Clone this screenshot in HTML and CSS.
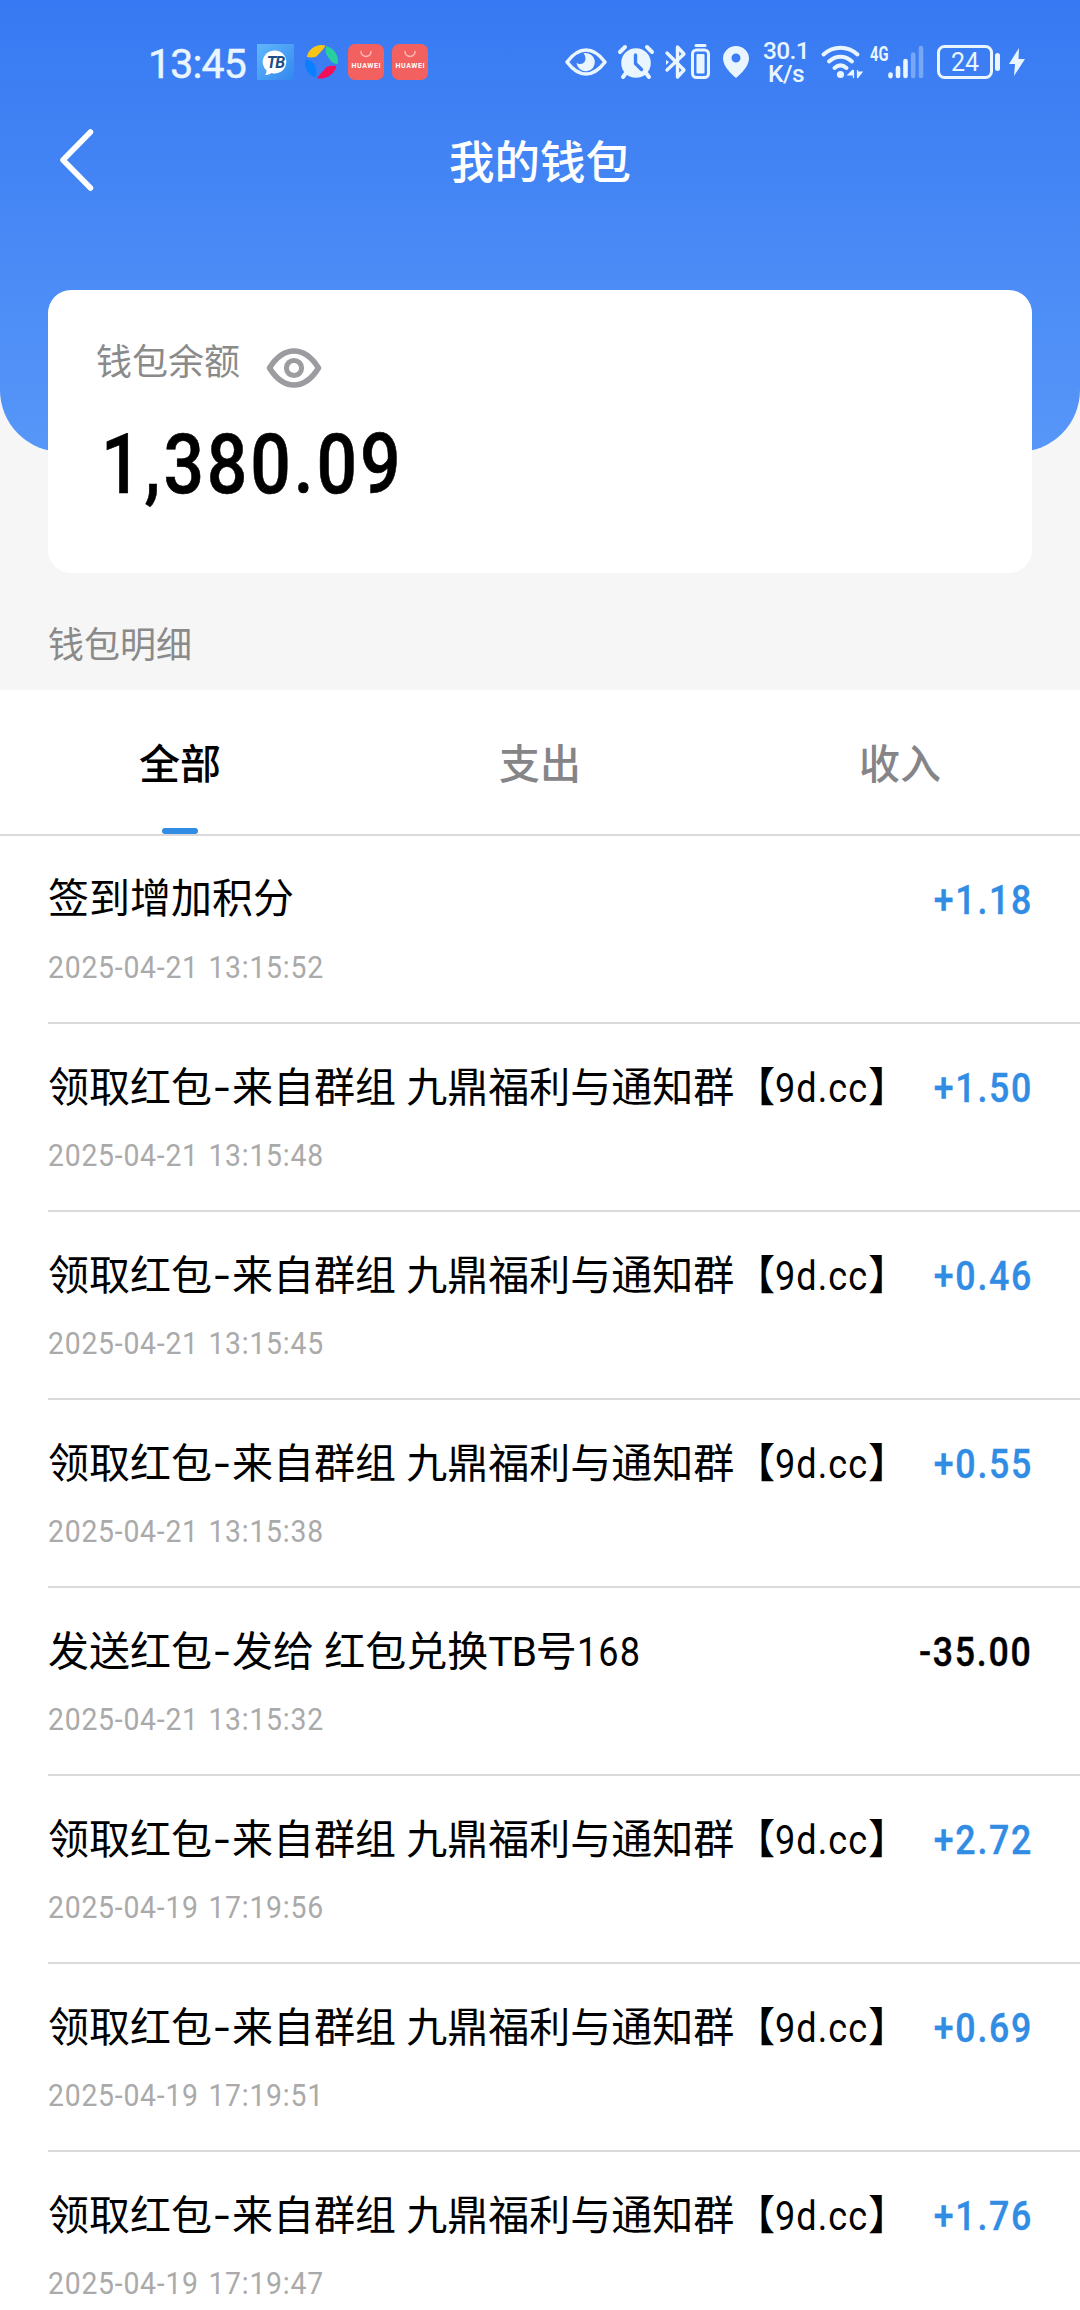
FILE: index.html
```html
<!DOCTYPE html>
<html lang="zh-CN">
<head>
<meta charset="utf-8">
<title>我的钱包</title>
<link rel="stylesheet" href="styles.css">
</head>
<body>
<header class="hero">
  <div class="status">
    <span class="clock">13:45</span>
    <svg class="app-tb" width="37" height="36" viewBox="0 0 37 36">
      <defs><linearGradient id="tb" x1="0" y1="0" x2="1" y2="1"><stop offset="0" stop-color="#62b8fb"/><stop offset="1" stop-color="#3287ee"/></linearGradient></defs>
      <rect width="37" height="36" fill="url(#tb)"/>
      <path d="M18.500 6.500a11.500 11.500 0 1 1-4 22.500c-2 1.500-4 2-6.500 2 1-1.200 1.600-2.600 1.500-4.500A11.500 11.500 0 0 1 18.500 6.500z" fill="#fff"/>
      <text class="tb-text" x="18.500" y="24" text-anchor="middle">TB</text>
    </svg>
    <svg class="app-ball" width="35" height="36" viewBox="0 0 35 36">
      <path d="M3 13C4 5 13 -1 21.500 1.500 20 5 16 8.500 12.500 12.500 9 14 6 13.500 3 13z" fill="#f9c515"/>
      <path d="M22 2c8 2 13 9 12 18-4 0-6-1-8.500-5C22 11 21 7 22 2z" fill="#27cf9d"/>
      <path d="M32.500 22c-2 8-9 13.500-19.500 12.500 2-4 6-7 9.500-11.500 4-1.500 6-1.500 10-1z" fill="#f20f57"/>
      <path d="M1.500 15c5 1 8 3 9.500 7 1.500 4 2 7 1 11.500C3 31-.5 23 1.500 15z" fill="#0b7fff"/>
    </svg>
    <svg class="app-store" width="36" height="36" viewBox="0 0 36 36">
      <rect width="36" height="36" rx="7" fill="#f2605f"/>
      <path d="M13 7.500c0 6.500 10 6.500 10 0" fill="none" stroke="#fbb9b4" stroke-width="1.500" stroke-linecap="round"/>
      <text class="store-text" x="18" y="23.500" text-anchor="middle" textLength="29">HUAWEI</text>
    </svg>
    <svg class="app-store app-store-next" width="36" height="36" viewBox="0 0 36 36">
      <rect width="36" height="36" rx="7" fill="#f2605f"/>
      <path d="M13 7.500c0 6.500 10 6.500 10 0" fill="none" stroke="#fbb9b4" stroke-width="1.500" stroke-linecap="round"/>
      <text class="store-text" x="18" y="23.500" text-anchor="middle" textLength="29">HUAWEI</text>
    </svg>
    <div class="indicators">
      <svg width="42" height="28" viewBox="0 0 42 28">
        <path d="M2 14C8 6 14 2 21 2s13 4 19 12c-6 8-12 12-19 12S8 22 2 14z" fill="none" stroke="#e9f5ff" stroke-width="3.600" stroke-linejoin="round"/>
        <path d="M18.500 5.200A9.200 9.200 0 1 1 11.500 14.500c3 3 8 1.500 8.800-2.500.5-2.500-.2-5-1.800-6.800z" fill="#e9f5ff"/>
      </svg>
      <svg class="i-alarm" width="36" height="34" viewBox="0 0 36 34">
        <circle cx="18" cy="18" r="14.800" fill="#e9f5ff"/>
        <path d="M2 7l5-5M34 7l-5-5M8 28l-3 4M28 28l3 4" stroke="#e9f5ff" stroke-width="4" stroke-linecap="round"/>
        <path d="M17.500 10v8.500l6 6" fill="none" stroke="#3b7ff3" stroke-width="3.400" stroke-linecap="round" stroke-linejoin="round"/>
      </svg>
      <svg class="i-bt" width="46" height="36" viewBox="0 0 46 36">
        <path d="M2 9l17 17-6.500 7V3L19 10 2 26" fill="none" stroke="#e9f5ff" stroke-width="3.400" stroke-linejoin="round" stroke-linecap="round"/>
        <path d="M1 16l3 2-3 3z" fill="#e9f5ff"/>
        <rect x="27.500" y="6" width="16" height="27.500" rx="4" fill="none" stroke="#e9f5ff" stroke-width="3"/>
        <path d="M31 1.500h9" stroke="#e9f5ff" stroke-width="3" stroke-linecap="round"/>
        <rect x="31.500" y="10" width="8" height="19.500" rx="1" fill="#e9f5ff"/>
      </svg>
      <svg class="i-pin" width="26" height="32" viewBox="0 0 26 32">
        <path d="M13 0a13 12.500 0 0 1 13 12.500C26 20 18 28 13 32 8 28 0 20 0 12.500A13 12.500 0 0 1 13 0zm0 7.500a4.500 4.500 0 1 0 0 9 4.500 4.500 0 0 0 0-9z" fill="#e9f5ff" fill-rule="evenodd"/>
      </svg>
      <div class="speed"><span>30.1</span><span>K/s</span></div>
      <svg class="i-wifi" width="42" height="34" viewBox="0 0 42 34">
        <path d="M2.500 9.500c10-9 24-9 34 0M8 16.500c7-6.500 16-6.500 23 0M13.500 23c4-3.500 8-3.500 12 0" fill="none" stroke="#e9f5ff" stroke-width="4" stroke-linecap="round"/>
        <circle cx="19.500" cy="29.500" r="3.600" fill="#e9f5ff"/>
        <path d="M32.500 25v8M32 25l-5 5h5M36.500 25v8M36.500 33l4.500-6h-4.500" fill="#e9f5ff" stroke="#e9f5ff" stroke-width="1.200"/>
      </svg>
      <svg class="i-signal" width="54" height="34" viewBox="0 0 54 34">
        <text class="net-text" x="0" y="15.500" textLength="18.500" lengthAdjust="spacingAndGlyphs">4G</text>
        <g stroke="#e9f5ff" stroke-width="4.600" stroke-linecap="round">
          <path d="M20.500 29.500v1.600M28 23v8M35.500 16v15"/>
          <path d="M43.200 9.500v21.500M51 3v28" opacity=".35"/>
        </g>
      </svg>
      <svg class="i-battery" width="64" height="34" viewBox="0 0 64 34">
        <rect x="1.500" y="1.500" width="53" height="31" rx="6" fill="none" stroke="#e9f5ff" stroke-width="3"/>
        <rect x="58" y="8" width="5" height="18" rx="2.500" fill="#e9f5ff"/>
        <text class="battery-text" x="28" y="26" text-anchor="middle">24</text>
      </svg>
      <svg class="i-bolt" width="16" height="28" viewBox="0 0 16 28"><path d="M10 0L0 16h6L5 28 16 11H9.500z" fill="#e9f5ff"/></svg>
    </div>
  </div>
  <nav class="navbar">
    <svg class="back" width="36" height="62" viewBox="0 0 36 62"><path d="M31.500 3L4 31l27.500 28" fill="none" stroke="#fff" stroke-width="5.500" stroke-linecap="round" stroke-linejoin="round"/></svg>
    <h1 class="title">我的钱包</h1>
  </nav>
</header>

<section class="card">
  <div class="card-head">
    <span>钱包余额</span>
    <svg width="56" height="42" viewBox="0 0 56 42">
      <path d="M3.500 21C11 9 19 4 28 4s17 5 24.500 17C45 33 37 38 28 38S11 33 3.500 21z" fill="none" stroke="#9b9ba0" stroke-width="5.600" stroke-linejoin="round"/>
      <circle cx="28" cy="21" r="7.600" fill="none" stroke="#9b9ba0" stroke-width="5"/>
    </svg>
  </div>
  <div class="balance">1,380.09</div>
</section>

<h2 class="section-title">钱包明细</h2>

<main class="panel">
  <div class="tabs">
    <div class="tab active">全部</div>
    <div class="tab">支出</div>
    <div class="tab">收入</div>
  </div>
  <ul class="list">
    <li class="row"><div class="line"><span class="name">签到增加积分</span><span class="amount">+1.18</span></div><time class="date">2025-04-21 13:15:52</time></li>
    <li class="row"><div class="line"><span class="name">领取红包<span class="dash">-</span>来自群组 九鼎福利与通知群【<span class="site">9d.cc</span>】</span><span class="amount">+1.50</span></div><time class="date">2025-04-21 13:15:48</time></li>
    <li class="row"><div class="line"><span class="name">领取红包<span class="dash">-</span>来自群组 九鼎福利与通知群【<span class="site">9d.cc</span>】</span><span class="amount">+0.46</span></div><time class="date">2025-04-21 13:15:45</time></li>
    <li class="row"><div class="line"><span class="name">领取红包<span class="dash">-</span>来自群组 九鼎福利与通知群【<span class="site">9d.cc</span>】</span><span class="amount">+0.55</span></div><time class="date">2025-04-21 13:15:38</time></li>
    <li class="row"><div class="line"><span class="name">发送红包<span class="dash">-</span>发给 红包兑换<span class="latin">TB</span>号<span class="number">168</span></span><span class="amount out">-35.00</span></div><time class="date">2025-04-21 13:15:32</time></li>
    <li class="row"><div class="line"><span class="name">领取红包<span class="dash">-</span>来自群组 九鼎福利与通知群【<span class="site">9d.cc</span>】</span><span class="amount">+2.72</span></div><time class="date">2025-04-19 17:19:56</time></li>
    <li class="row"><div class="line"><span class="name">领取红包<span class="dash">-</span>来自群组 九鼎福利与通知群【<span class="site">9d.cc</span>】</span><span class="amount">+0.69</span></div><time class="date">2025-04-19 17:19:51</time></li>
    <li class="row"><div class="line"><span class="name">领取红包<span class="dash">-</span>来自群组 九鼎福利与通知群【<span class="site">9d.cc</span>】</span><span class="amount">+1.76</span></div><time class="date">2025-04-19 17:19:47</time></li>
  </ul>
</main>
</body>
</html>
```
FILE: styles.css
```css
* { box-sizing: border-box; }
body {
  margin: 0;
  width: 1080px;
  height: 2310px;
  overflow: hidden;
  background: #f6f6f6;
  font-family: Roboto, "Noto Sans CJK SC", sans-serif;
  color: #000;
}
svg { display: block; flex: none; overflow: visible; }

.hero {
  height: 452px;
  border-radius: 0 0 62px 62px;
  background: linear-gradient(#3779f2, #5797f9);
}
.status {
  display: flex;
  align-items: center;
  height: 124px;
  padding-left: 148px;
}
.clock {
  width: 109px;
  padding-top: 4px;
  font-size: 41px;
  line-height: 48px;
  letter-spacing: -0.8px;
  -webkit-text-stroke: 0.5px #e9f5ff;
  color: #e9f5ff;
}
.app-ball { margin-left: 10px; }
.app-store { margin-left: 9px; }
.app-store-next { margin-left: 8px; }
.tb-text { font: italic 700 16px Roboto, sans-serif; fill: #1c4e86; letter-spacing: -1px; }
.store-text { font: 700 7px Roboto, sans-serif; fill: #fff; }

.indicators { display: flex; align-items: center; margin-left: 137px; }
.i-alarm { margin-left: 11px; }
.i-bt { margin-left: 11px; }
.i-pin { margin-left: 12px; }
.speed {
  display: flex;
  flex-direction: column;
  align-items: center;
  width: 46px;
  margin-left: 14px;
  font-size: 24.5px;
  font-weight: 500;
  line-height: 23px;
  letter-spacing: -0.6px;
  color: #e9f5ff;
}
.i-wifi { margin-left: 12px; }
.i-signal { margin-left: 7px; }
.i-battery { margin-left: 13px; }
.i-bolt { margin-left: 8px; }
.net-text { font: 700 21px Roboto, sans-serif; fill: #e9f5ff; }
.battery-text { font: 400 25px Roboto, sans-serif; fill: #e9f5ff; }

.navbar {
  display: grid;
  grid-template-columns: 120px 1fr 120px;
  align-items: center;
  height: 72px;
}
.back { margin-left: 59px; }
.title {
  margin: 0;
  padding-top: 8px;
  text-align: center;
  font-size: 45.5px;
  font-weight: 500;
  line-height: 64px;
  color: #fff;
}

.card {
  position: relative;
  height: 283px;
  margin: -162px 48px 0;
  padding: 46px 48px 0;
  border-radius: 23px;
  background: #fff;
}
.card-head {
  display: flex;
  align-items: center;
  height: 54px;
  gap: 26px;
  font-size: 36px;
  line-height: 54px;
  color: #8a8a8a;
}
.card-head svg { margin-top: 10px; }
.balance {
  margin: 26px 0 0 5px;
  font-size: 83px;
  font-weight: 500;
  line-height: 98px;
  letter-spacing: 3.4px;
  -webkit-text-stroke: 0.6px #000;
  transform: scaleX(0.86);
  transform-origin: left;
}

.section-title {
  margin: 0;
  height: 117px;
  padding: 46px 48px 0;
  font-size: 36px;
  font-weight: 400;
  line-height: 54px;
  color: #8a8a8a;
}

.panel { background: #fff; }
.tabs {
  display: grid;
  grid-template-columns: repeat(3, 1fr);
  height: 146px;
  border-bottom: 2px solid #dadada;
}
.tab {
  display: flex;
  flex-direction: column;
  align-items: center;
  padding-top: 45px;
  font-size: 41px;
  font-weight: 500;
  line-height: 60px;
  color: #858588;
}
.tab.active { color: #000; }
.tab.active::after {
  content: "";
  width: 36px;
  height: 6px;
  margin-top: 33px;
  border-radius: 3px;
  background: #318ce4;
}

.list { margin: 0; padding: 0 0 0 48px; list-style: none; }
.row {
  height: 188px;
  padding: 33px 48px 0 0;
  border-bottom: 2px solid #dadada;
}
.line {
  display: flex;
  justify-content: space-between;
  height: 60px;
  font-size: 41px;
  line-height: 60px;
}
.name { white-space: nowrap; }
.latin { letter-spacing: -1.2px; }
.site, .number {
  display: inline-block;
  letter-spacing: 1.2px;
  transform: scaleX(0.88);
  transform-origin: left;
}
.site { margin-right: -13px; }
.number { margin-right: -9px; }
.dash {
  display: inline-block;
  width: 20px;
  text-align: center;
  font-family: Inter, sans-serif;
}
.amount {
  margin-right: -1px;
  padding-top: 1px;
  font-weight: 500;
  letter-spacing: 2px;
  -webkit-text-stroke: 0.4px currentColor;
  transform: scaleX(0.87);
  transform-origin: right;
  color: #318ce4;
}
.amount.out { color: #000; }
.date {
  display: block;
  margin-top: 20px;
  font-size: 31.5px;
  line-height: 38px;
  letter-spacing: 0.85px;
  word-spacing: 2px;
  transform: scaleX(0.9);
  transform-origin: left;
  color: #aaa;
}
```
